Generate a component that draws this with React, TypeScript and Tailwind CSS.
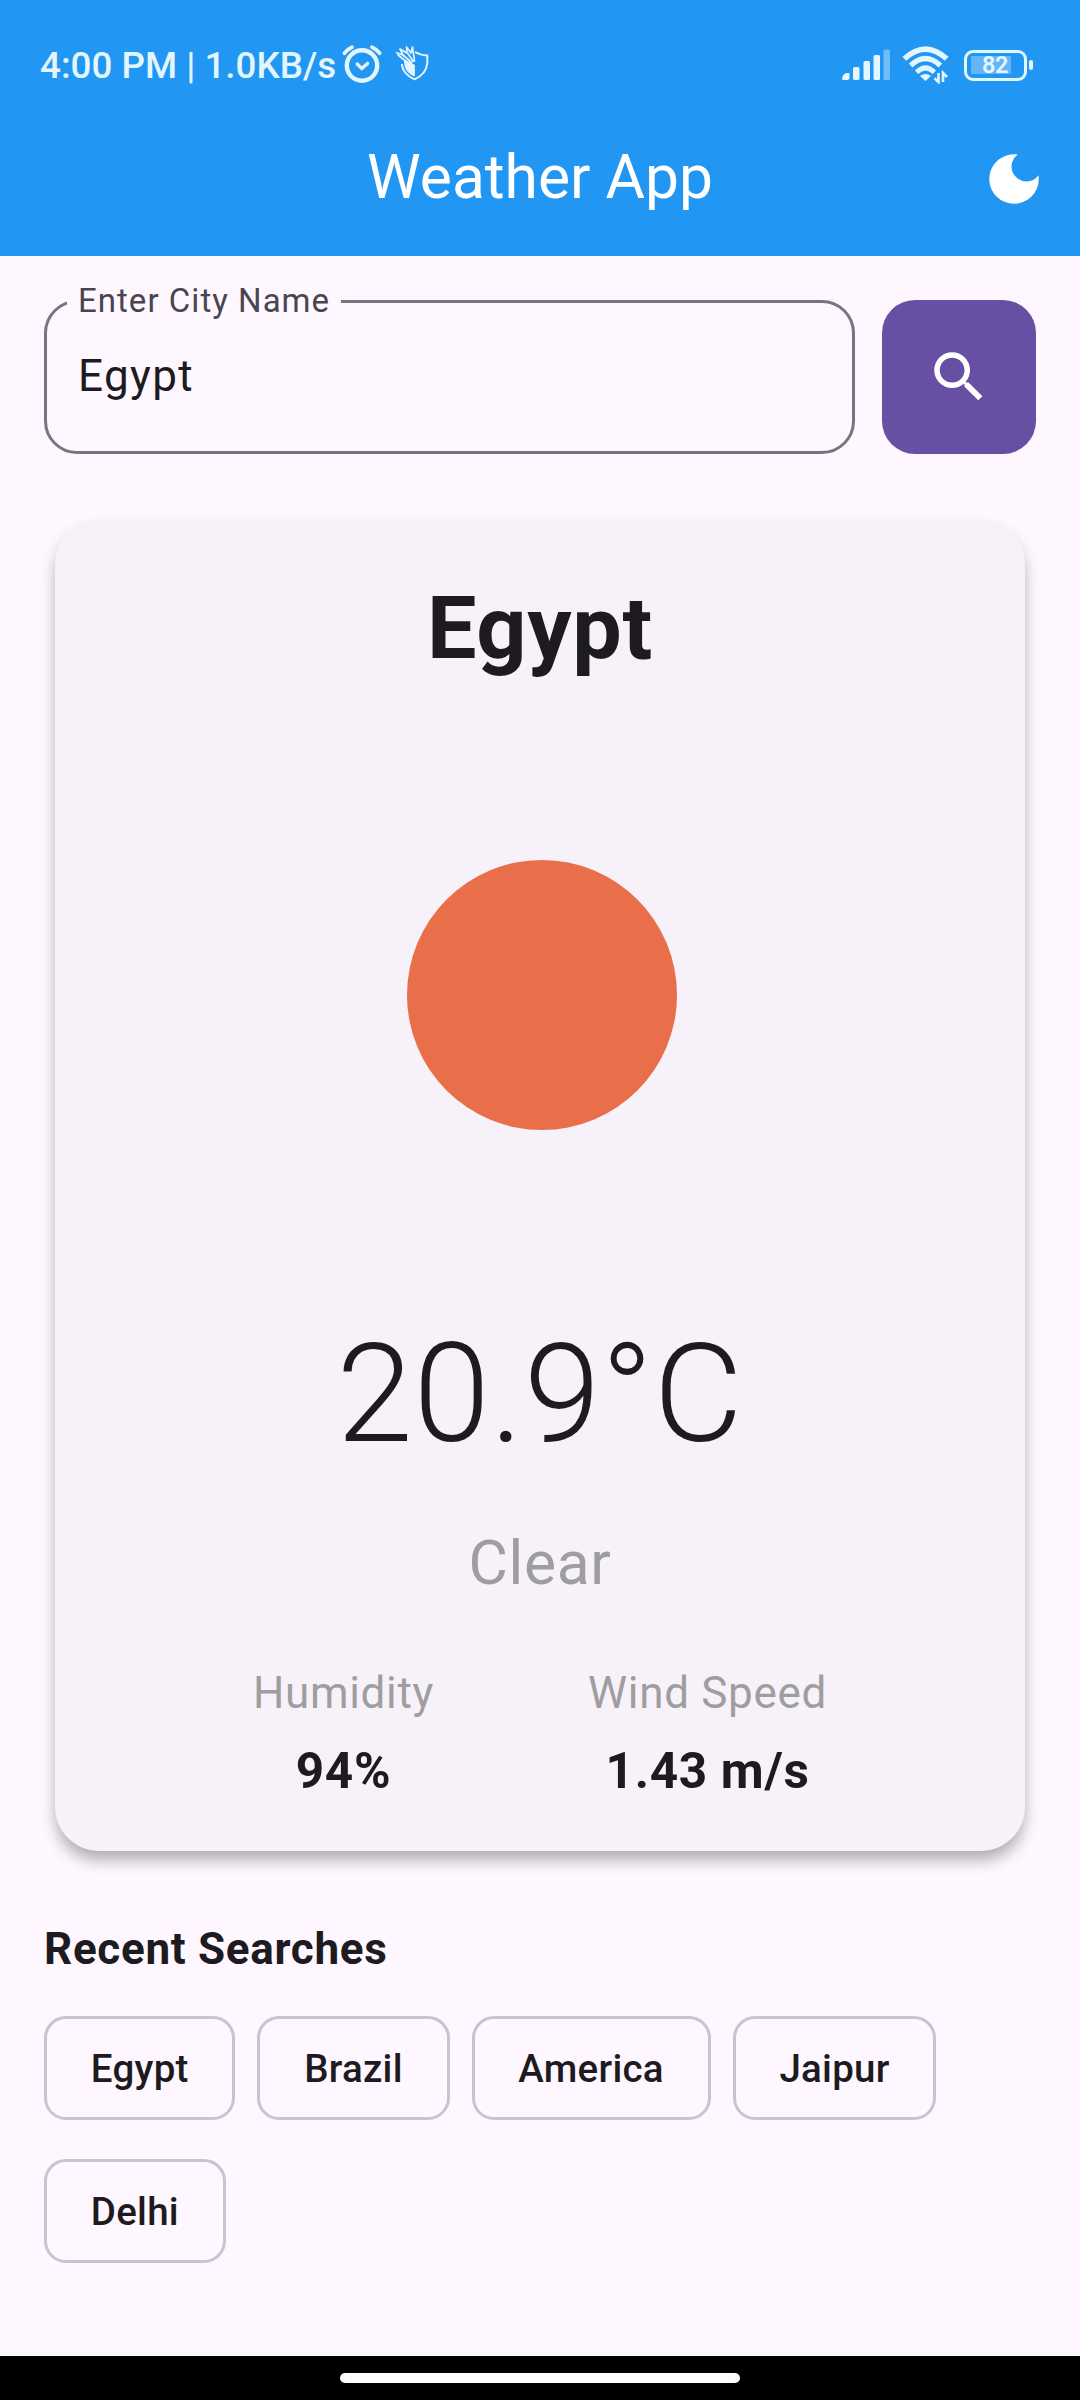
import React from 'react';

const recent = ['Egypt', 'Brazil', 'America', 'Jaipur', 'Delhi'];

function AlarmIcon() {
  return (
    <svg className="ml-[5px] h-[40px] w-[42px]" viewBox="0 0 42 40" fill="none" stroke="#e3f6ff" strokeLinecap="round" strokeLinejoin="round">
      <circle cx="21" cy="21.500" r="15.200" strokeWidth="4.400" />
      <path d="M3.400 9.200Q6.500 5 11 3.200M38.600 9.200Q35.500 5 31 3.200" strokeWidth="3.800" />
      <path d="M16.200 20L20.800 24.600L26.600 19.400" strokeWidth="3.400" />
    </svg>
  );
}

function ShieldIcon() {
  return (
    <svg className="ml-[12px] mt-[1px] h-[36px] w-[34px]" viewBox="0 0 34 36" fill="none" stroke="#e3f6ff" strokeLinejoin="round">
      <path d="M20 7Q25 10 32.300 10.500V18Q31.500 29 19.500 34.300Q7.500 29 6.800 19" strokeWidth="2" />
      <path d="M9.600 15L19.300 20V31Q9.600 27 9.600 17Z" fill="#e3f6ff" strokeWidth="1" />
      <path d="M1 7.500L8 10L5 4L12 8L11.500 2L16 8L17.500 2L19.500 16L13 18L2.500 9.500" strokeWidth="1.700" />
      <path d="M8 10L16 17M12.500 8L18 16" strokeWidth="1.700" />
    </svg>
  );
}

function SignalIcon() {
  return (
    <svg className="h-[32px] w-[49px]" viewBox="0 0 49 32" fill="#e3f6ff">
      <path d="M0.300 31V28.500Q1 24.500 5 24H7.500V29.500L6 31Z" />
      <rect x="11" y="18" width="6.500" height="13" rx="1.500" />
      <rect x="21.500" y="12" width="6.500" height="19" rx="1.500" />
      <rect x="31.500" y="6" width="6.500" height="25" rx="1.500" />
      <rect x="41.500" y="0.500" width="6.500" height="30.500" rx="1.500" opacity="0.4" />
    </svg>
  );
}

function WifiIcon() {
  return (
    <svg className="ml-[11px] h-[38px] w-[48px]" viewBox="0 0 48 38" fill="none" stroke="#e3f6ff">
      <path d="M2.300 12.800Q23.500 -6.600 44.700 12.800" strokeWidth="5.400" />
      <path d="M8.600 19.500Q23.500 5.500 38.400 19.500" strokeWidth="5.200" />
      <path d="M14.600 26.200Q23.500 17.500 32.400 26.200" strokeWidth="4.800" />
      <path d="M18 30Q23.500 26 29 30L23.500 35Z" fill="#e3f6ff" stroke="none" />
      <path d="M36.500 27V36L32.500 32.300M41 36V27L45 31" strokeWidth="2.600" />
    </svg>
  );
}

function Battery() {
  return (
    <div className="ml-[14px] flex items-center gap-[2px]">
      <div className="flex h-[31px] w-[63px] items-center rounded-[9px] border-[3px] border-[#e0f8fa] pl-[4px]">
        <div className="flex h-[18px] w-[40px] items-center justify-center bg-[#64b5f8] pl-[8px] text-[23.500px] font-semibold leading-[18px] tracking-[-0.5px] text-[#e3f6ff]">
          82
        </div>
      </div>
      <div className="h-[10px] w-[4px] rounded-[2px] bg-[#e3f6ff]" />
    </div>
  );
}

function StatusBar() {
  return (
    <div className="flex h-[102px] items-start justify-between pl-[40px] pr-[47px] text-[#e3f6ff]">
      <div className="flex pt-[44px]">
        <span className="whitespace-pre text-[36.750px] font-medium leading-[44px]">4:00 PM | 1.0KB/s</span>
        <AlarmIcon />
        <ShieldIcon />
      </div>
      <div className="flex items-center pt-[46px]">
        <SignalIcon />
        <WifiIcon />
        <Battery />
      </div>
    </div>
  );
}

function Stat({ label, value }: { label: string; value: string }) {
  return (
    <div className="flex flex-col items-center">
      <span className="text-[44px] leading-[63px] tracking-[0.69px] text-[#9e9e9e]">{label}</span>
      <span className="mt-[11px] text-[49.5px] font-bold leading-[71px] tracking-[0.69px]">{value}</span>
    </div>
  );
}

export default function App() {
  return (
    <div className="flex h-[2400px] w-[1080px] flex-col overflow-hidden bg-[#fef7ff] font-['Roboto',sans-serif] text-[#1d1b20]">
      <header className="h-[256px] bg-[#2196f3]">
        <StatusBar />
        <div className="grid h-[154px] grid-cols-[1fr_auto_1fr] items-center px-[33px] text-white">
          <h1 className="col-start-2 pb-[4px] text-[60.5px] leading-[77px]">Weather App</h1>
          <svg className="h-[66px] w-[66px] justify-self-end" viewBox="0 0 24 24" fill="currentColor">
            <path d="M12 3a9 9 0 1 0 9 9c0-.46-.04-.92-.1-1.36a5.389 5.389 0 0 1-4.400 2.260 5.403 5.403 0 0 1-3.140-9.800c-.44-.06-.9-.1-1.360-.1z" />
          </svg>
        </div>
      </header>

      <main className="flex flex-1 flex-col px-[44px] pt-[44px]">
        <div className="flex gap-[27.5px]">
          <div className="relative flex h-[154px] flex-1 items-center rounded-[33px] border-[3px] border-[#79747e] pb-[2px] pl-[31px]">
            <span className="absolute left-[20px] top-[-24px] bg-[#fef7ff] px-[11px] text-[33px] leading-[44px] tracking-[1.03px] text-[#49454f]">
              Enter City Name
            </span>
            <span className="text-[44px] leading-[66px] tracking-[1.375px]">Egypt</span>
          </div>
          <button className="flex h-[154px] w-[154px] items-center justify-center rounded-[33px] bg-[#6750a4] text-white">
            <svg className="h-[66px] w-[66px]" viewBox="0 0 24 24" fill="currentColor">
              <path d="M15.500 14h-.79l-.28-.27A6.471 6.471 0 0 0 16 9.500 6.500 6.500 0 1 0 9.500 16c1.610 0 3.090-.59 4.230-1.570l.27.28v.79l5 4.990L20.490 19l-4.990-5zm-6 0C7.010 14 5 11.990 5 9.500S7.010 5 9.500 5 14 7.010 14 9.500 11.990 14 9.500 14z" />
            </svg>
          </button>
        </div>

        <section className="mx-[11px] mt-[66px] flex h-[1331px] flex-col items-center rounded-[44px] bg-[#f7f2fa] pt-[45px] shadow-[0_10px_15px_-1px_rgba(0,0,0,0.31)]">
          <h2 className="text-[88px] font-bold leading-[126px] tracking-[0.69px]">Egypt</h2>
          <div className="ml-[3px] mt-[169px] h-[270px] w-[270px] rounded-full bg-[#e96f4a]" />
          <p className="mt-[166px] text-[137.500px] font-light leading-[196px] tracking-[0.69px]">20.9°C</p>
          <p className="mt-[29px] text-[60.5px] leading-[86px] tracking-[0.69px] text-[#9e9e9e]">Clear</p>
          <div className="mt-[55px] flex w-full justify-center gap-[154px]">
            <Stat label="Humidity" value="94%" />
            <Stat label="Wind Speed" value="1.43 m/s" />
          </div>
        </section>

        <h3 className="mt-[67px] text-[44px] font-bold leading-[63px] tracking-[0.69px]">Recent Searches</h3>
        <div className="mt-[35px] flex flex-wrap gap-x-[22px] gap-y-[39px]">
          {recent.map((city) => (
            <button
              key={city}
              className="h-[104px] rounded-[22px] border-[3px] border-[#cac4d0] px-[43.750px] text-[38.5px] font-medium leading-[55px] tracking-[0.275px]"
            >
              {city}
            </button>
          ))}
        </div>
      </main>

      <footer className="flex h-[44px] justify-center bg-black pt-[17px]">
        <div className="h-[10px] w-[400px] rounded-full bg-white" />
      </footer>
    </div>
  );
}
